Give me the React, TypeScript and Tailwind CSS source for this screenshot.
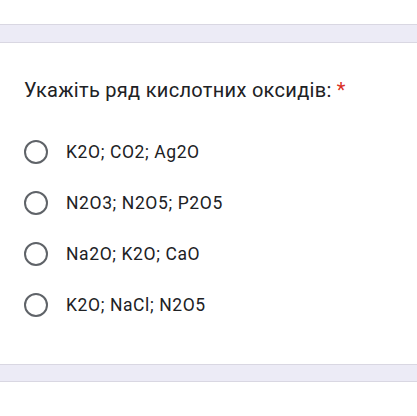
import React from 'react';

const options = ['K2O; CO2; Ag2O', 'N2O3; N2O5; P2O5', 'Na2O; K2O; CaO', 'K2O; NaCl; N2O5'];

const App: React.FC = () => {
  return (
    <div className="w-[417px] h-[416px] bg-white overflow-hidden font-['Roboto',sans-serif] text-[#202124]">
      {/* top spacer */}
      <div className="h-[24px] bg-white" />
      <div className="h-[19px] bg-[#ecebf6] border-y border-[#d9d7e2]" />

      {/* question card */}
      <div className="h-[321px] bg-white pl-[24px] pt-[33px]">
        <h2 className="text-[20px] leading-[28px] tracking-[0.3px]">
          Укажіть ряд кислотних оксидів: <span className="text-[#d93025]">*</span>
        </h2>
        <div className="mt-[36px] flex flex-col gap-[27px]">
          {options.map((opt) => (
            <label key={opt} className="flex items-center gap-[18px] h-[24px]">
              <span className="w-[24px] h-[24px] rounded-full border-[2.5px] border-[#5f6368] shrink-0" />
              <span className="text-[17.5px] leading-[24px] tracking-[0.6px]">{opt}</span>
            </label>
          ))}
        </div>
      </div>

      <div className="h-[18px] bg-[#ecebf6] border-y border-[#d9d7e2]" />
    </div>
  );
};

export default App;
